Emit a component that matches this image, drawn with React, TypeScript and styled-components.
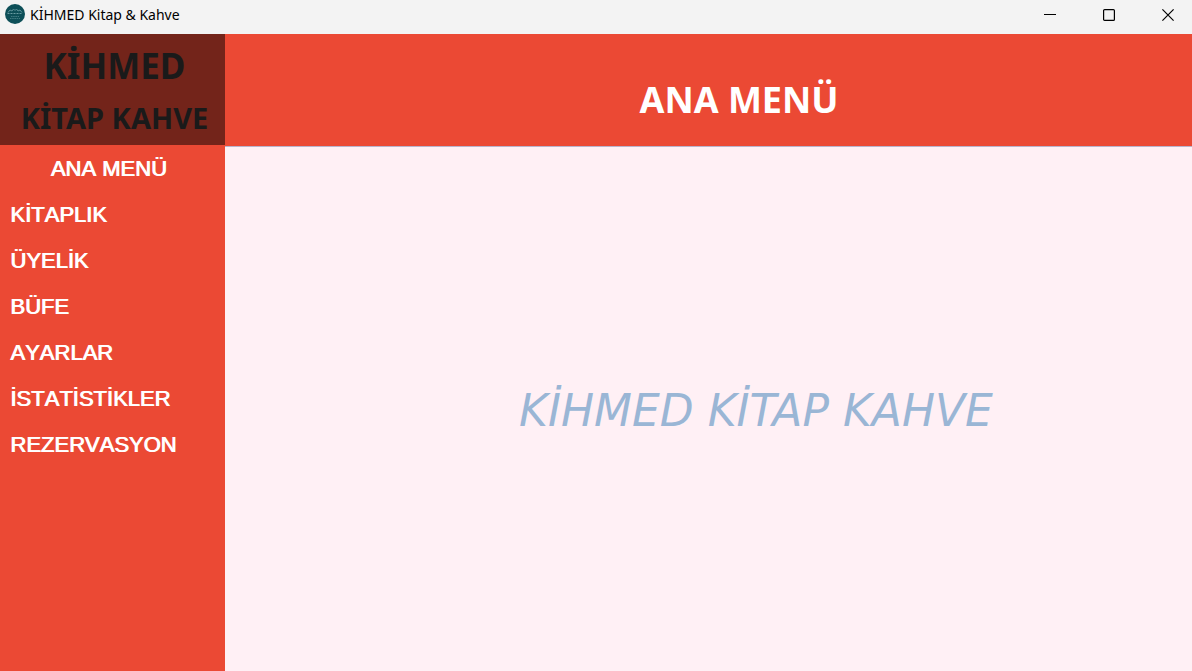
import React from "react";
import styled, { createGlobalStyle } from "styled-components";

const GlobalStyle = createGlobalStyle`
  *, *::before, *::after { box-sizing: border-box; }
  body { margin: 0; background: #fff0f5; }
`;

const Window = styled.div`
  display: flex;
  flex-direction: column;
  min-height: 100vh;
  font-family: "Noto Sans", "Open Sans", sans-serif;
`;

const TitleBar = styled.header`
  display: flex;
  align-items: center;
  height: 34px;
  padding-left: 5px;
  background: #f3f3f3;
`;

const WindowTitle = styled.span`
  flex: 1;
  padding: 0 0 4px 5px;
  font-size: 14px;
  line-height: 20px;
  color: #000;
`;

const AppLogo = styled.svg`
  width: 20px;
  height: 20px;
  margin-bottom: 6px;
`;

const WindowControls = styled.div`
  display: flex;
  gap: 1px;
`;

const WindowButton = styled.button`
  display: flex;
  align-items: center;
  justify-content: center;
  width: 58px;
  height: 34px;
  padding: 0 0 4px 10px;
  border: 0;
  background: transparent;
  color: #000;
`;

const Body = styled.div`
  display: flex;
  flex: 1;
`;

const Sidebar = styled.aside`
  flex: 0 0 225px;
  background: #eb4934;
`;

const Brand = styled.div`
  display: flex;
  flex-direction: column;
  align-items: center;
  height: 111px;
  padding: 6px 0 0 4px;
  background: #73241a;
  color: #1a1a1a;
  font-weight: 700;
  white-space: nowrap;
`;

const BrandName = styled.span`
  font-size: 35px;
  line-height: 52px;
`;

const BrandSub = styled.span`
  font-size: 29px;
  line-height: 52px;
`;

const Nav = styled.nav`
  display: flex;
  flex-direction: column;
  padding-top: 1px;
`;

const NavButton = styled.button<{ $centered?: boolean }>`
  height: 46px;
  padding: ${(p) => (p.$centered ? "0 8px 0 0" : "0 0 0 10px")};
  border: 0;
  background: transparent;
  color: #fff;
  font-family: "Liberation Sans", Arial, sans-serif;
  font-size: 22px;
  font-weight: 400;
  font-kerning: none;
  line-height: 26px;
  text-align: ${(p) => (p.$centered ? "center" : "left")};
  text-shadow: 1px 0 0 #fff;
`;

const Main = styled.main`
  display: flex;
  flex: 1;
  flex-direction: column;
  min-width: 0;
  background: #fff0f5;
`;

const PageHeader = styled.div`
  display: flex;
  align-items: center;
  justify-content: center;
  height: 113px;
  padding: 20px 0 0 61px;
  border-bottom: 1px solid #b9b4cc;
  background: #eb4934;
`;

const PageTitle = styled.h1`
  margin: 0;
  color: #fff;
  font-size: 36px;
  font-weight: 700;
  line-height: 48px;
`;

const Content = styled.section`
  display: flex;
  flex: 1;
  align-items: center;
  justify-content: center;
  padding: 4px 0 0 95px;
`;

const Slogan = styled.p`
  margin: 0;
  color: #9ab6d5;
  font-family: "Ink Free", "Segoe Print", "DejaVu Sans", sans-serif;
  font-size: 44px;
  font-style: italic;
  line-height: 56px;
  white-space: nowrap;
`;

const items = ["KİTAPLIK", "ÜYELİK", "BÜFE", "AYARLAR", "İSTATİSTİKLER", "REZERVASYON"];

export default function App() {
  return (
    <Window>
      <GlobalStyle />
      <TitleBar>
        <AppLogo viewBox="0 0 20 20" aria-hidden="true">
          <circle cx="10" cy="10" r="10" fill="#0d4f58" />
          <path d="M3 8.500 5 6l2 1 1.500-2L10 6.500 11.500 5 13 7l2-1 2 2.500" fill="none" stroke="#5d9299" />
          <path d="M2.500 9.500h15" stroke="#6b9da3" strokeDasharray="2 1" />
          <path d="M6 12.500h8M5 14.500h10" stroke="#4f868e" strokeWidth=".8" strokeDasharray="1.500 .7" />
        </AppLogo>
        <WindowTitle>KİHMED Kitap &amp; Kahve</WindowTitle>
        <WindowControls>
          <WindowButton aria-label="Simge durumuna küçült">
            <svg width="12" height="12" viewBox="0 0 12 12">
              <path d="M0 5.500h12" stroke="currentColor" />
            </svg>
          </WindowButton>
          <WindowButton aria-label="Ekranı kapla">
            <svg width="12" height="12" viewBox="0 0 12 12">
              <rect x=".6" y=".6" width="10.800" height="10.800" rx="1" fill="none" stroke="currentColor" strokeWidth="1.200" />
            </svg>
          </WindowButton>
          <WindowButton aria-label="Kapat">
            <svg width="12" height="12" viewBox="0 0 12 12">
              <path d="m.4.4 11.200 11.200M11.600.4.4 11.600" stroke="currentColor" strokeWidth="1.200" />
            </svg>
          </WindowButton>
        </WindowControls>
      </TitleBar>
      <Body>
        <Sidebar>
          <Brand>
            <BrandName>KİHMED</BrandName>
            <BrandSub>KİTAP KAHVE</BrandSub>
          </Brand>
          <Nav>
            <NavButton $centered>ANA MENÜ</NavButton>
            {items.map((item) => (
              <NavButton key={item}>{item}</NavButton>
            ))}
          </Nav>
        </Sidebar>
        <Main>
          <PageHeader>
            <PageTitle>ANA MENÜ</PageTitle>
          </PageHeader>
          <Content>
            <Slogan>KİHMED KİTAP KAHVE</Slogan>
          </Content>
        </Main>
      </Body>
    </Window>
  );
}
